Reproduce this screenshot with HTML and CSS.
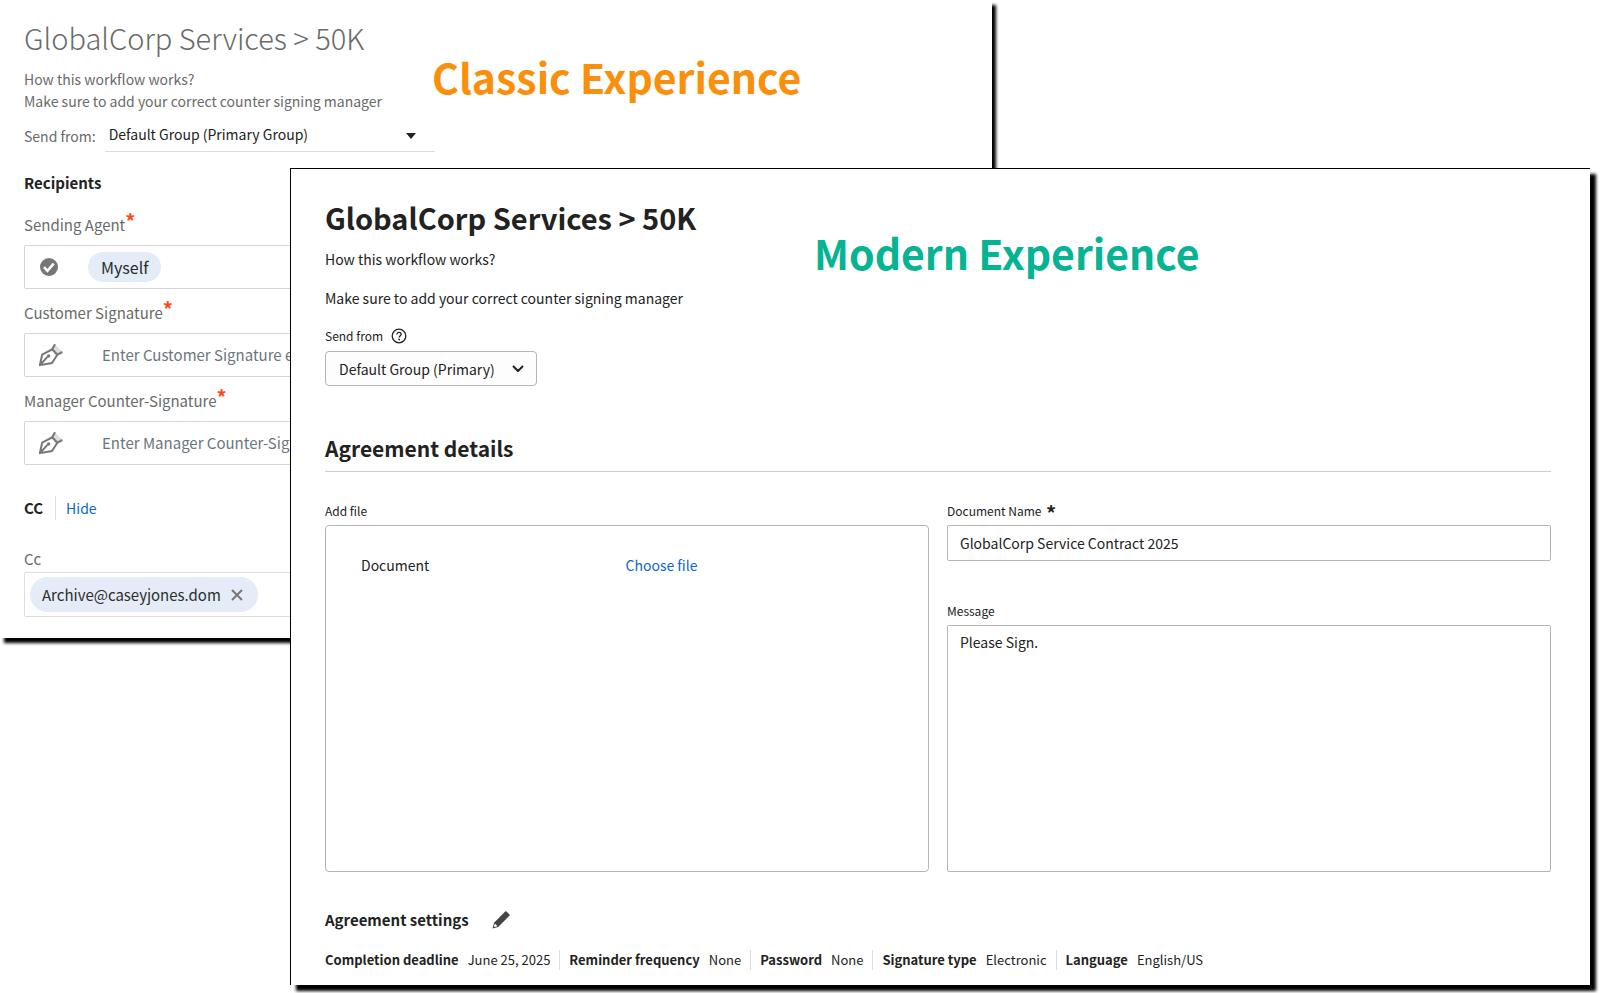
FILE: index.html
```
<!DOCTYPE html>
<html lang="en">
<head>
    <meta charset="utf-8">
    <title>GlobalCorp Services &gt; 50K</title>
    <link rel="stylesheet" href="styles.css">
</head>
<body>
    <div class="desktop">
        <section class="classic">
            <h1 class="classic-title">GlobalCorp Services &gt; 50K</h1>
            <p class="classic-text">How this workflow works?</p>
            <p class="classic-text">Make sure to add your correct counter signing manager</p>
            <div class="classic-send">
                <label for="classicGroup">Send from:</label>
                <div class="classic-select">
                    <select id="classicGroup">
                        <option>Default Group (Primary Group)</option>
                    </select>
                    <svg class="select-icon" width="10" height="6" viewBox="0 0 10 6"><path d="M0 0h10L5 6z" fill="#222"/></svg>
                </div>
            </div>

            <h2 class="classic-heading">Recipients</h2>

            <div class="classic-label">Sending Agent<span class="star">*</span></div>
            <div class="classic-field">
                <svg class="field-icon" width="24" height="24" viewBox="0 0 24 24">
                    <circle cx="10" cy="12" r="9" fill="#767676"/>
                    <path d="M5 12.2l3.4 3.6 6.3-7.2" fill="none" stroke="#fff" stroke-width="2.6"/>
                </svg>
                <span class="chip chip-self">Myself</span>
            </div>

            <label class="classic-label" for="customer">Customer Signature<span class="star">*</span></label>
            <div class="classic-field">
                <svg class="field-icon" width="24" height="24" viewBox="0 0 24 24">
                    <path d="M.8 22.2L3.2 11.6l10-5.3 5.2 5.4-5.5 8.4zM1 22l7.5-8.2" fill="none" stroke="#777" stroke-width="2"/>
                    <path d="M16 1.2l7.4 7.8-5 2.7-5.2-5.4z" fill="#ddd"/>
                    <path d="M13.2 6.3L16 1.2M18.4 11.7l5-2.7M13.2 6.3l5.2 5.4" fill="none" stroke="#777" stroke-width="2"/>
                    <circle cx="9.6" cy="13" r="1.7" fill="#777"/>
                </svg>
                <input id="customer" type="email" placeholder="Enter Customer Signature email">
            </div>

            <label class="classic-label" for="manager">Manager Counter-Signature<span class="star">*</span></label>
            <div class="classic-field">
                <svg class="field-icon" width="24" height="24" viewBox="0 0 24 24">
                    <path d="M.8 22.2L3.2 11.6l10-5.3 5.2 5.4-5.5 8.4zM1 22l7.5-8.2" fill="none" stroke="#777" stroke-width="2"/>
                    <path d="M16 1.2l7.4 7.8-5 2.7-5.2-5.4z" fill="#ddd"/>
                    <path d="M13.2 6.3L16 1.2M18.4 11.7l5-2.7M13.2 6.3l5.2 5.4" fill="none" stroke="#777" stroke-width="2"/>
                    <circle cx="9.6" cy="13" r="1.7" fill="#777"/>
                </svg>
                <input id="manager" type="email" placeholder="Enter Manager Counter-Signature email">
            </div>

            <div class="cc-row">
                <h2>CC</h2>
                <a href="#cc">Hide</a>
            </div>
            <div class="cc-label">Cc</div>
            <div class="cc-field" id="cc">
                <span class="chip">Archive@caseyjones.dom
                    <button class="chip-remove" aria-label="Remove">
                        <svg width="12" height="12" viewBox="0 0 12 12"><path d="M1 1l10 10M11 1L1 11" stroke="#777" stroke-width="2"/></svg>
                    </button>
                </span>
            </div>
            <div class="caption caption-classic">Classic Experience</div>
        </section>

        <section class="modern">
            <h1 class="modern-title">GlobalCorp Services &gt; 50K</h1>
            <p class="modern-text">How this workflow works?</p>
            <p class="modern-text">Make sure to add your correct counter signing manager</p>
            <div class="modern-send">
                <label for="modernGroup">Send from</label>
                <svg width="16" height="16" viewBox="0 0 16 16">
                    <circle cx="8" cy="8" r="6.8" fill="none" stroke="#222" stroke-width="1.3"/>
                    <path d="M5.9 6.4c0-1.3.9-2.1 2.2-2.1s2.1.8 2.1 1.9c0 1.5-2 1.7-2 3.3" fill="none" stroke="#222" stroke-width="1.3"/>
                    <circle cx="8.1" cy="11.5" r=".9" fill="#222"/>
                </svg>
            </div>
            <div class="modern-select">
                <select id="modernGroup">
                    <option>Default Group (Primary)</option>
                </select>
                <svg class="select-icon" width="12" height="8" viewBox="0 0 12 8"><path d="M1.5 1.5L6 6l4.5-4.5" fill="none" stroke="#222" stroke-width="2" stroke-linecap="round" stroke-linejoin="round"/></svg>
            </div>

            <h2 class="modern-heading">Agreement details</h2>

            <div class="details">
                <div class="column">
                    <div class="field-label">Add file</div>
                    <div class="file-box">
                        <span>Document</span>
                        <a href="#choose">Choose file</a>
                    </div>
                </div>
                <div class="column">
                    <label class="field-label" for="docName">Document Name <b>*</b></label>
                    <input class="text-box" id="docName" type="text" value="GlobalCorp Service Contract 2025">
                    <label class="field-label message-label" for="message">Message</label>
                    <textarea class="text-box message" id="message">Please Sign.</textarea>
                </div>
            </div>

            <div class="settings-head">
                <h3>Agreement settings</h3>
                <button aria-label="Edit settings">
                    <svg width="18" height="18" viewBox="0 0 18 18">
                        <path d="M13.2.6a1 1 0 0 1 1.4 0l2.8 2.8a1 1 0 0 1 0 1.4L6.2 16 .6 17.6 2 11.8z" fill="#444"/>
                        <path d="M2.9 12.5l2.6 2.7-3 .9-.6-.6z" fill="#fff"/>
                    </svg>
                </button>
            </div>
            <dl class="settings">
                <div><dt>Completion deadline</dt><dd>June 25, 2025</dd></div>
                <div><dt>Reminder frequency</dt><dd>None</dd></div>
                <div><dt>Password</dt><dd>None</dd></div>
                <div><dt>Signature type</dt><dd>Electronic</dd></div>
                <div><dt>Language</dt><dd>English/US</dd></div>
            </dl>
            <div class="caption caption-modern">Modern Experience</div>
        </section>
    </div>
</body>
</html>
```
FILE: styles.css
```
* {
    box-sizing: border-box;
}
body {
    margin: 0;
    background-color: #fff;
    color: #222;
    font-family: "Noto Sans CJK SC", "Noto Sans", sans-serif;
    font-size: 14px;
    line-height: 22px;
}
h1, h2, h3, p, dl, dd {
    margin: 0;
}
a {
    color: #0d66d0;
    text-decoration: none;
}
input, select, textarea, button {
    font: inherit;
    color: inherit;
}
select {
    appearance: none;
    width: 100%;
}
button {
    display: flex;
    padding: 0;
    border: none;
    background: none;
    cursor: pointer;
}
svg {
    display: block;
    flex: none;
}

/* two windows, the modern one on top */
.desktop {
    position: relative;
    padding: 168px 10px 9px 290px;
}
.classic {
    position: absolute;
    top: 0;
    left: 0;
    width: 62%;
    padding: 17px 24px 21px;
    background-color: #fff;
    box-shadow: 4px 5px 3px #000;
    color: #6a6a6a;
}
.modern {
    position: relative;
    padding: 28px 39px 15px 34px;
    border-top: 1px solid #000;
    border-left: 1px solid #000;
    background-color: #fff;
    box-shadow: 6px 6px 3px #000;
}
.caption {
    position: absolute;
    font-size: 41px;
    font-weight: bold;
    line-height: 56px;
    white-space: nowrap;
}
.caption-classic {
    top: 48px;
    left: 432px;
    color: #fa8f0c;
}
.caption-modern {
    top: 55px;
    left: 523px;
    color: #06b392;
}

/* classic */
.classic-title {
    font-size: 29px;
    font-weight: 300;
    line-height: 40px;
    margin-bottom: 11px;
}
.classic-send {
    display: flex;
    align-items: center;
    gap: 9px;
    margin-top: 7px;
}
.classic-select {
    position: relative;
    width: 330px;
    border-bottom: 1px solid #ddd;
}
.classic-select select {
    height: 32px;
    padding: 0 4px 2px;
    border: none;
    background: none;
    color: #222;
}
.select-icon {
    position: absolute;
    top: 14px;
    right: 19px;
    pointer-events: none;
}
.classic-heading {
    margin: 19px 0 18px;
    font-size: 15px;
    line-height: 24px;
    color: #222;
}
.classic-label {
    display: block;
    font-size: 15px;
    line-height: 24px;
}
.star {
    color: #ff4713;
    font-size: 20px;
    font-weight: bold;
    line-height: 16px;
    vertical-align: 2px;
}
.classic-field {
    display: flex;
    align-items: center;
    height: 44px;
    margin: 8px 0 12px;
    padding-left: 14px;
    border: 1px solid #d5d5d5;
    border-radius: 2px;
}
.classic-field input {
    flex: 1;
    margin-left: 39px;
    padding: 0;
    border: none;
    font-size: 15px;
}
.classic-field input::placeholder {
    color: #6a7680;
}
.chip {
    display: flex;
    align-items: center;
    gap: 10px;
    padding: 0 15px 0 12px;
    height: 35px;
    border-radius: 18px;
    background-color: #e4ecf7;
    color: #2c2c2c;
    font-size: 15px;
}
.chip-self {
    height: 30px;
    margin-left: 25px;
    padding: 0 13px;
    font-size: 16px;
}
.cc-row {
    display: flex;
    align-items: center;
    margin-top: 31px;
    line-height: 24px;
}
.cc-row h2 {
    padding-right: 12px;
    border-right: 1px solid #ddd;
    margin-right: 10px;
    font-size: 15px;
    color: #222;
}
.cc-label {
    margin: 27px 0 1px;
    font-size: 15px;
    line-height: 24px;
}
.cc-field {
    display: flex;
    align-items: center;
    height: 45px;
    padding-left: 5px;
    border: 1px solid #ddd;
    border-radius: 2px;
}

/* modern */
.modern-title {
    font-size: 29px;
    line-height: 40px;
    padding-bottom: 2px;
}
.modern-text {
    margin: 9px 0 17px;
}
.modern-send {
    display: flex;
    align-items: center;
    gap: 8px;
    margin: 16px 0 5px;
    font-size: 12px;
    line-height: 20px;
}
.modern-select {
    position: relative;
    width: 212px;
}
.modern-select select {
    display: block;
    height: 35px;
    padding: 0 13px;
    border: 1px solid #b5b5b5;
    border-radius: 4px;
    background-color: #fdfdfd;
}
.modern-select .select-icon {
    right: 13px;
}
.modern-heading {
    margin-top: 46px;
    padding-bottom: 7px;
    border-bottom: 1px solid #ccc;
    font-size: 21px;
    line-height: 32px;
}
.details {
    display: grid;
    grid-template-columns: 1fr 1fr;
    gap: 18px;
    margin-top: 29px;
}
.column {
    display: flex;
    flex-direction: column;
}
.field-label {
    margin-bottom: 4px;
    font-size: 12px;
    line-height: 20px;
}
.field-label b {
    margin-left: 2px;
    font-size: 20px;
    line-height: 16px;
    vertical-align: -5px;
}
.file-box {
    display: grid;
    grid-template-columns: 1fr 1fr;
    flex: 1;
    padding: 28px 38px 28px 35px;
    border: 1px solid #b5b5b5;
    border-radius: 4px;
}
.text-box {
    width: 100%;
    height: 36px;
    padding: 0 12px;
    border: 1px solid #b5b5b5;
    border-radius: 2px;
}
.message-label {
    margin-top: 40px;
}
.message {
    height: 247px;
    padding: 5px 12px;
    resize: none;
}
.settings-head {
    display: flex;
    align-items: center;
    gap: 23px;
    margin-top: 36px;
}
.settings-head h3 {
    font-size: 15px;
    line-height: 24px;
}
.settings {
    display: flex;
    flex-wrap: wrap;
    margin-top: 18px;
    font-size: 13px;
    line-height: 20px;
}
.settings div {
    display: flex;
    gap: 9px;
    padding-right: 9px;
    margin-right: 9px;
    border-right: 1px solid #ddd;
}
.settings div:last-child {
    border-right: none;
}
.settings dt {
    font-weight: bold;
}
```
